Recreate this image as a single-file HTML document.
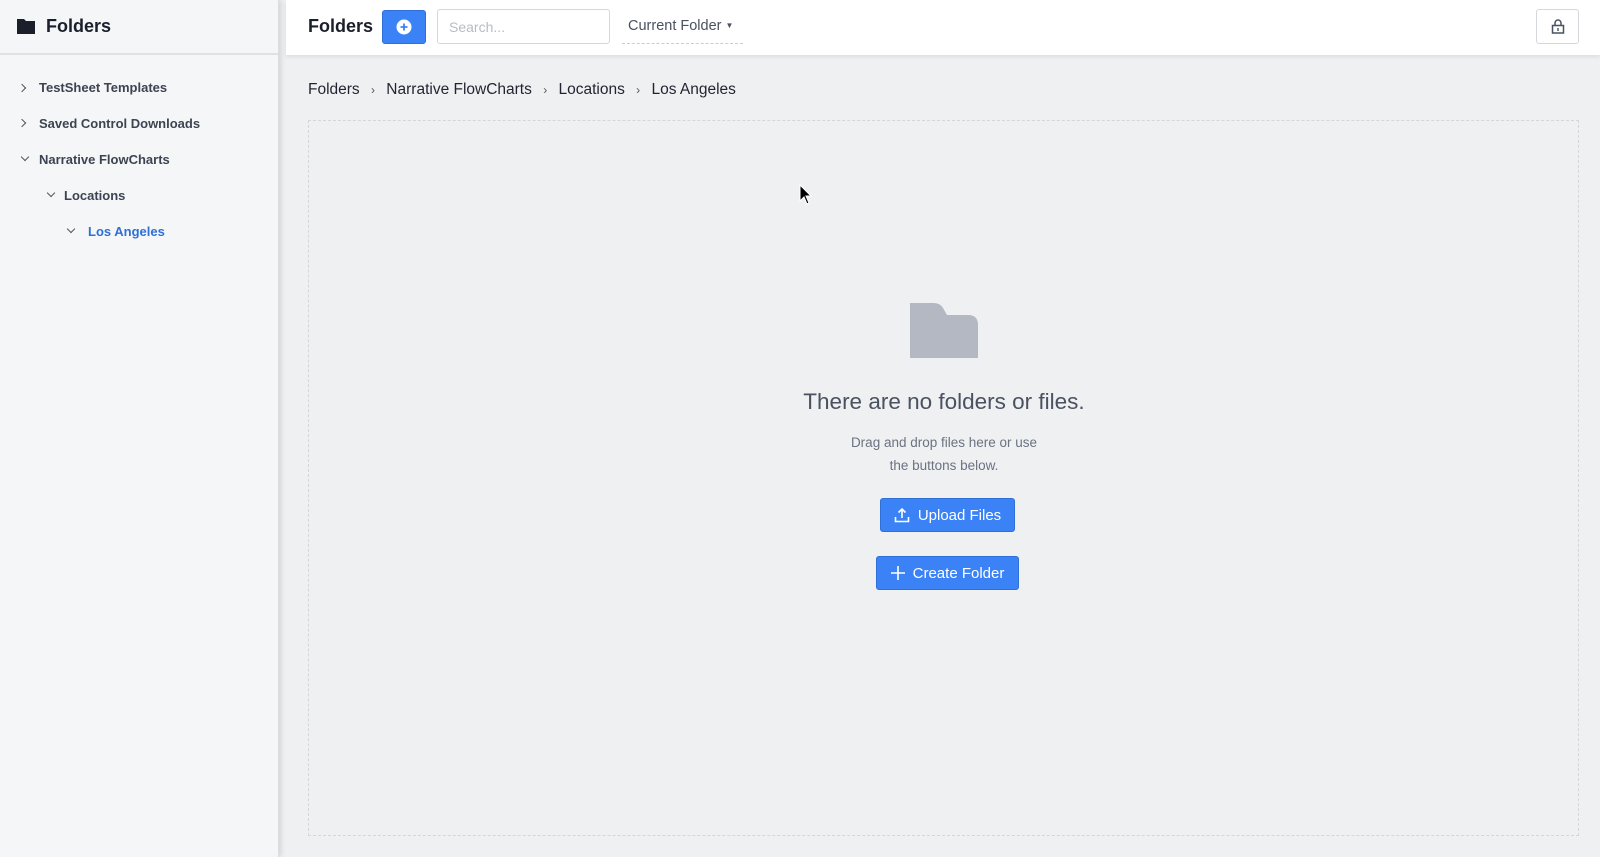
<!DOCTYPE html>
<html><head><style>
*{box-sizing:border-box;margin:0;padding:0}
body{width:1600px;height:857px;overflow:hidden;background:#eff0f2;font-family:"Liberation Sans",sans-serif;position:relative;color:#1f2430}
.side{position:absolute;left:0;top:0;width:279px;height:857px;background:#f5f6f8;border-right:1px solid #dcdee2;box-shadow:2px 0 5px rgba(0,0,0,.12)}
.sh{height:55px;border-bottom:2px solid #dfe1e5;position:relative}
.sh span{position:absolute;left:46px;top:16px;font-size:18px;font-weight:bold;color:#1a1f2b}
.it{position:absolute;font-size:13px;font-weight:bold;color:#3d4451;white-space:nowrap}
.ch{position:absolute;width:6px;height:6px;border-right:1.4px solid #555;border-bottom:1.4px solid #555}
.r{transform:rotate(-45deg)}.d{transform:rotate(45deg)}
.hdr{position:absolute;left:286px;top:0;right:0;height:55px;background:#fff;box-shadow:0 2px 4px rgba(0,0,0,.08)}
.a{position:absolute}
.btn{position:absolute;background:#3b82f6;border:1px solid #2f6fd8;border-radius:3px;color:#fff;font-size:15px;display:flex;align-items:center;justify-content:center;gap:8px;white-space:nowrap}
</style></head><body>
<div class="side"><div class="sh">
<svg class="a" style="left:17px;top:18px" width="18" height="16" viewBox="0 0 18 16"><path d="M0 1h7l2 2h9v13H0z" fill="#1a1f2b"/></svg>
<span>Folders</span></div>
<div class="ch r" style="left:19px;top:85px"></div><div class="it" style="left:39px;top:80px">TestSheet Templates</div>
<div class="ch r" style="left:19px;top:120px"></div><div class="it" style="left:39px;top:116px">Saved Control Downloads</div>
<div class="ch d" style="left:22px;top:154px"></div><div class="it" style="left:39px;top:152px">Narrative FlowCharts</div>
<div class="ch d" style="left:48px;top:190px"></div><div class="it" style="left:64px;top:188px">Locations</div>
<div class="ch d" style="left:68px;top:226px"></div><div class="it" style="left:88px;top:224px;color:#2f6fd8">Los Angeles</div>
</div>
<div class="hdr">
<div class="a" style="left:22px;top:16px;font-size:18px;font-weight:bold;color:#1a1f2b">Folders</div>
<div class="btn" style="left:96px;top:10px;width:44px;height:34px"><svg width="16" height="16" viewBox="0 0 16 16"><circle cx="8" cy="8" r="7.5" fill="#fff"/><path d="M8 4.5v7M4.5 8h7" stroke="#3b82f6" stroke-width="1.8"/></svg></div>
<div class="a" style="left:151px;top:9px;width:173px;height:35px;border:1px solid #d4d7dc;border-radius:3px;padding:9px 11px;font-size:14px;color:#b8bcc3">Search...</div>
<div class="a" style="left:336px;top:9px;width:121px;height:35px;border-bottom:1px dashed #c9ccd1;padding:9px 6px;font-size:14.5px;color:#4a5160;white-space:nowrap">Current Folder <span style="font-size:8px;position:relative;top:-2px">▼</span></div>
<div class="a" style="left:1250px;top:9px;width:43px;height:35px;border:1px solid #d4d7dc;border-radius:3px"><svg class="a" style="left:14px;top:9px" width="14" height="15" viewBox="0 0 14 15"><path d="M4 6V4a3 3 0 0 1 6 0v2" fill="none" stroke="#4a5160" stroke-width="1.5"/><rect x="1.5" y="6.5" width="11" height="7.5" fill="none" stroke="#4a5160" stroke-width="1.5"/><rect x="6.3" y="9" width="1.4" height="3" fill="#4a5160"/></svg></div>
</div>
<div class="a" style="left:308px;top:81px;font-size:15.5px;color:#1f2430;white-space:nowrap">Folders <span style="font-size:12px;margin:0 7px;color:#555">›</span> Narrative FlowCharts <span style="font-size:12px;margin:0 7px;color:#555">›</span> Locations <span style="font-size:12px;margin:0 7px;color:#555">›</span> Los Angeles</div>
<div class="a" style="left:308px;top:120px;width:1271px;height:716px;border:1px dashed #d3d6db"></div>
<svg class="a" style="left:910px;top:303px" width="68" height="55" viewBox="0 0 68 55"><path d="M0 0h24q6 0 9 5l4 7h21q10 0 10 10v33H0z" fill="#b3b8c3"/></svg>
<div class="a" style="left:0;width:1888px;top:389px;text-align:center;font-size:22.5px;color:#4a5160">There are no folders or files.</div>
<div class="a" style="left:0;width:1888px;top:431px;text-align:center;font-size:13.5px;line-height:23px;color:#6b7280">Drag and drop files here or use<br>the buttons below.</div>
<div class="btn" style="left:880px;top:498px;width:135px;height:34px"><svg width="16" height="16" viewBox="0 0 16 16"><path d="M8 11V2M4.5 5.5L8 2l3.5 3.5M1.5 10v4.5h13V10" fill="none" stroke="#fff" stroke-width="1.6"/></svg>Upload Files</div>
<div class="btn" style="left:876px;top:556px;width:143px;height:34px"><svg width="14" height="14" viewBox="0 0 14 14"><path d="M7 0v14M0 7h14" stroke="#fff" stroke-width="1.6"/></svg>Create Folder</div>
<svg class="a" style="left:799px;top:184px" width="13" height="21" viewBox="0 0 13 21"><path d="M1 1v16l4-4 3 7 2-1-3-7h5z" fill="#000" stroke="#fff" stroke-width="1"/></svg>
</body></html>
